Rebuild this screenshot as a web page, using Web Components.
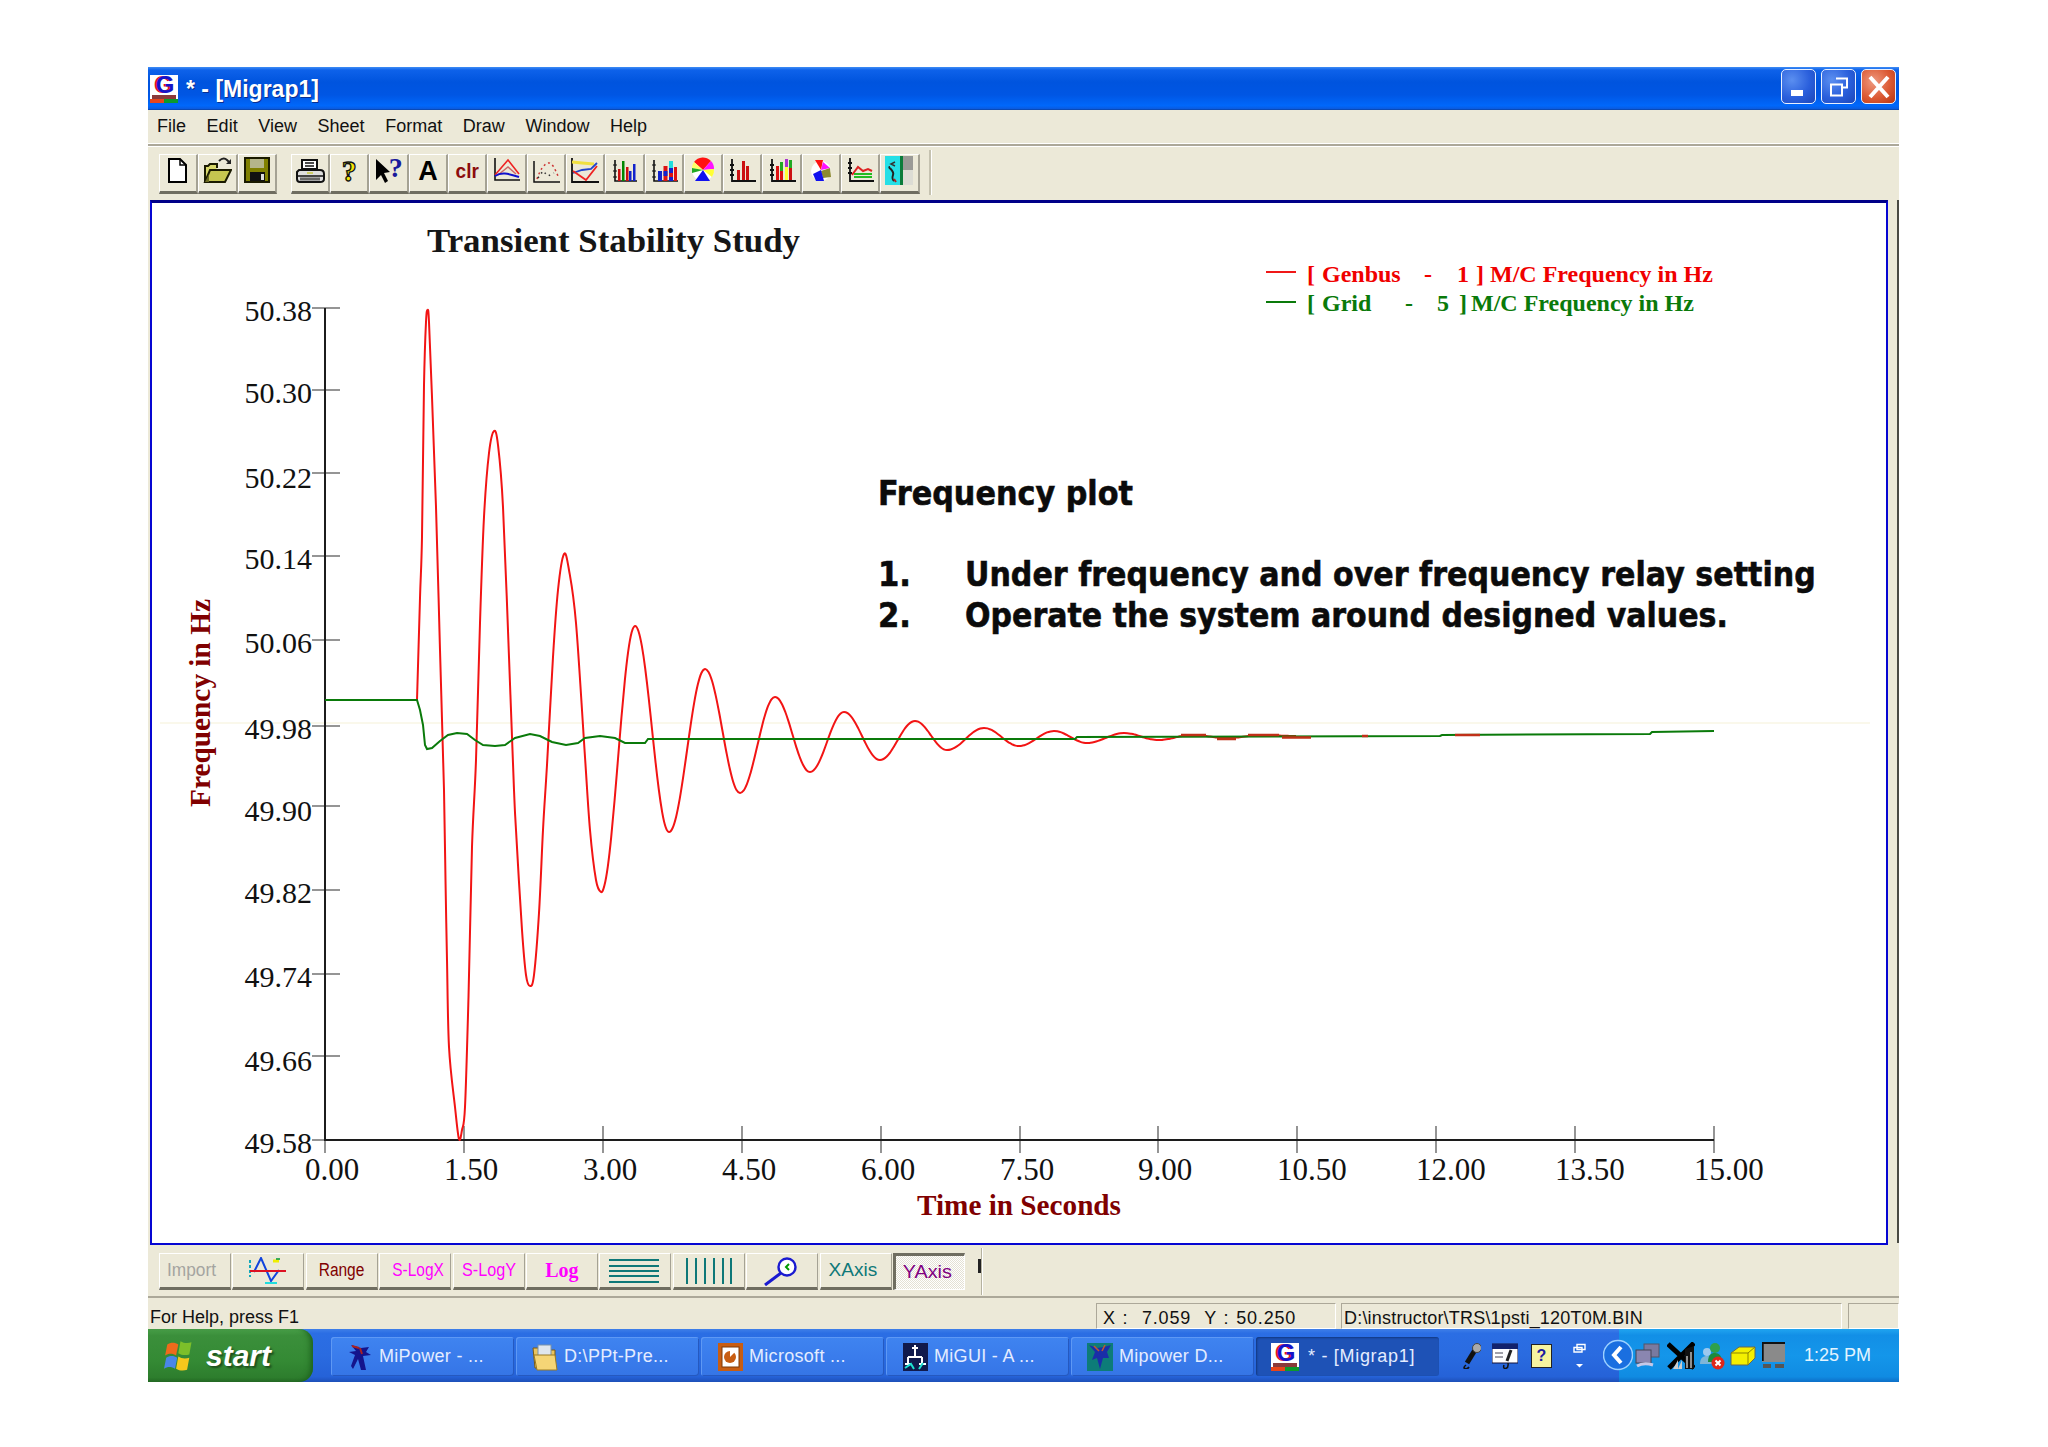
<!DOCTYPE html>
<html lang="en">
<head>
<meta charset="utf-8">
<title>Migrap1</title>
<style>
html,body{margin:0;background:#fff}
body{padding:67px 0 0 148px;width:1900px;height:1380px;overflow:hidden;font-family:"Liberation Sans",Arial,sans-serif}
</style>
</head>
<body>
<xp-window>
  <xp-titlebar>* - [Migrap1]</xp-titlebar>
  <xp-menubar><span>File</span><span>Edit</span><span>View</span><span>Sheet</span><span>Format</span><span>Draw</span><span>Window</span><span>Help</span></xp-menubar>
  <xp-toolbar>
    <xp-tool><svg viewBox="0 0 30 28" width="30" height="28"><path d="M6 2h11l6 6v17H6z" fill="#fff" stroke="#000" stroke-width="2"/><path d="M17 2v6h6" fill="none" stroke="#000" stroke-width="1.5"/></svg></xp-tool>
    <xp-tool><svg viewBox="0 0 30 28" width="30" height="28"><path d="M3 25V9h3l2-2h7v4" fill="#d8d86a" stroke="#1a1a00" stroke-width="2"/><path d="M3 25l5-12h21l-6 12z" fill="#c6c650" stroke="#1a1a00" stroke-width="2"/><path d="M3 25l4-8v8z" fill="#6a6a20"/><path d="M17 4c3-3 6-3 8-1l2 2" fill="none" stroke="#222" stroke-width="2"/><path d="M24 7h5V2z" fill="#222"/></svg></xp-tool>
    <xp-tool><svg viewBox="0 0 30 28" width="30" height="28"><rect x="3" y="1" width="24" height="24" fill="#808000" stroke="#1a1a00" stroke-width="2"/><rect x="8" y="2" width="14" height="9" fill="#b5b58a"/><rect x="8" y="15" width="15" height="9" fill="#111"/><rect x="19" y="17" width="3" height="6" fill="#ddd"/></svg></xp-tool>
    <xp-tool style="margin-left:14px"><svg viewBox="0 0 30 28" width="30" height="28"><path d="M7 3h15v9H7z" fill="#fff" stroke="#111" stroke-width="2"/><path d="M10 6h9M10 9h9" stroke="#111" stroke-width="1.3"/><path d="M4 13h21c3 0 4 2 4 4v5c0 2-2 3-4 3H5c-2 0-3-1-3-3v-7z" fill="#ddd" stroke="#111" stroke-width="2"/><path d="M2 19h27" stroke="#111" stroke-width="1.5"/><path d="M5 22h20" stroke="#666" stroke-width="3"/><path d="M12 16h6" stroke="#cc6" stroke-width="2"/></svg></xp-tool>
    <xp-tool><span style="font:700 30px/30px 'Liberation Serif',serif;color:#f2e60a;-webkit-text-stroke:1.3px #111">?</span></xp-tool>
    <xp-tool><svg viewBox="0 0 16 26" width="16" height="26"><path d="M1 1l14 13-6 1 4 8-3 2-4-8-5 5z" fill="#000"/></svg><span style="font:700 28px/28px 'Liberation Serif',serif;color:#1a1a9c;margin:-6px 0 0 -2px">?</span></xp-tool>
    <xp-tool><span style="font:700 27px/28px 'Liberation Sans',sans-serif;color:#000">A</span></xp-tool>
    <xp-tool><span style="font:700 20px/24px 'Liberation Sans',sans-serif;color:#8c0d0d;transform:scaleX(.95)">clr</span></xp-tool>
    <xp-tool><svg viewBox="0 0 30 28" width="30" height="28"><path d="M3 1v22h25" fill="none" stroke="#111" stroke-width="1.6"/><path d="M3 18L16 3l11 14" fill="none" stroke="#e22" stroke-width="1.6"/><path d="M6 18l10-8 8 7" fill="none" stroke="#c66" stroke-width="1.4"/><path d="M3 19c6-4 12-3 24 1" fill="none" stroke="#11c" stroke-width="2"/></svg></xp-tool>
    <xp-tool><svg viewBox="0 0 30 28" width="30" height="28"><path d="M3 4v21h26" fill="none" stroke="#111" stroke-width="1.5"/><path d="M6 22c3-9 7-15 11-16s7 6 10 13" fill="none" stroke="#c33" stroke-width="1.5" stroke-dasharray="2 3"/><path d="M7 21l5-7 5 5 6-3" fill="none" stroke="#333" stroke-width="1.5" stroke-dasharray="1.5 4"/></svg></xp-tool>
    <xp-tool><svg viewBox="0 0 30 28" width="30" height="28"><path d="M2 1v24h27" fill="none" stroke="#111" stroke-width="1.8"/><path d="M2 5l10 1 12 1" fill="none" stroke="#f0e040" stroke-width="3"/><path d="M3 16l9-3 9-1 6-6" fill="none" stroke="#2244cc" stroke-width="1.8"/><path d="M3 14l13 9 11-14" fill="none" stroke="#e22" stroke-width="1.8"/></svg></xp-tool>
    <xp-tool><svg viewBox="0 0 30 28" width="30" height="28"><path d="M6 3v21h22" fill="none" stroke="#111" stroke-width="1.6"/><path d="M4 8h4M4 14h4M4 20h4" stroke="#111"/><rect x="9" y="12" width="2.5" height="12" fill="#c11"/><rect x="13" y="4" width="2.5" height="20" fill="#080"/><rect x="17" y="10" width="2.5" height="14" fill="#c11"/><rect x="20" y="14" width="2.5" height="10" fill="#12c"/><rect x="24" y="7" width="2.5" height="17" fill="#12c"/></svg></xp-tool>
    <xp-tool><svg viewBox="0 0 30 28" width="30" height="28"><path d="M5 3v21h24" fill="none" stroke="#111" stroke-width="1.6"/><path d="M3 8h4M3 14h4M3 20h4" stroke="#111"/><rect x="9" y="14" width="4" height="10" fill="#12c"/><rect x="14.5" y="9" width="4" height="15" fill="#d11"/><rect x="14.5" y="14" width="4" height="5" fill="#12c"/><rect x="20" y="4" width="4" height="20" fill="#12c"/><rect x="20" y="4" width="4" height="7" fill="#2dd"/><rect x="20" y="16" width="4" height="4" fill="#d11"/><rect x="25" y="10" width="3" height="14" fill="#d11"/></svg></xp-tool>
    <xp-tool><svg viewBox="0 0 30 28" width="30" height="28"><circle cx="15" cy="13" r="11" fill="#fff"/><path d="M15 13L6 5A11 11 0 0 1 23 4z" fill="#f11"/><path d="M15 13L23 4A11 11 0 0 1 26 12z" fill="#f1f"/><path d="M15 13L26 12A11 11 0 0 1 24 20z" fill="#ff3"/><path d="M15 13L22 24H7z" fill="#11e"/><path d="M15 13L6 5A11 11 0 0 0 4 11z" fill="#ff6"/><path d="M15 13L4 11V16z" fill="#2a2"/></svg></xp-tool>
    <xp-tool><svg viewBox="0 0 30 28" width="30" height="28"><path d="M5 2v22h24M3 8h4M3 13h4M3 18h4" fill="none" stroke="#111" stroke-width="1.8"/><rect x="10" y="13" width="3" height="10" fill="#c11"/><rect x="15" y="4" width="3" height="19" fill="#c11"/><rect x="19" y="9" width="3" height="14" fill="#c11"/></svg></xp-tool>
    <xp-tool><svg viewBox="0 0 30 28" width="30" height="28"><path d="M5 2v22h24M3 8h4M3 13h4M3 18h4" fill="none" stroke="#111" stroke-width="1.8"/><rect x="9" y="9" width="3" height="14" fill="#d11"/><rect x="13" y="5" width="3" height="9" fill="#2a2"/><rect x="13" y="14" width="3" height="9" fill="#d11"/><rect x="18" y="2" width="3" height="8" fill="#a3c"/><rect x="18" y="10" width="3" height="13" fill="#ff3"/><rect x="22" y="3" width="3" height="8" fill="#2a2"/><rect x="22" y="11" width="3" height="12" fill="#c11"/></svg></xp-tool>
    <xp-tool><svg viewBox="0 0 30 28" width="30" height="28"><circle cx="15" cy="14" r="10" fill="#fff"/><path d="M15 13L9 3h8z" fill="#f11"/><path d="M15 13l2-8 7 6z" fill="#f1f"/><path d="M15 14l9-3 1 9-8 1z" fill="#8c8a30"/><path d="M15 13L7 17l3 7h8z" fill="#11e"/></svg></xp-tool>
    <xp-tool><svg viewBox="0 0 30 28" width="30" height="28"><path d="M5 1v23h24M3 6h4M3 11h4M3 16h4" fill="none" stroke="#111" stroke-width="1.8"/><path d="M7 18l6-8 5 4 5-2 4 2" fill="none" stroke="#d22" stroke-width="2"/><path d="M9 17h18M9 20h18" stroke="#2b2" stroke-width="2"/></svg></xp-tool>
    <xp-tool><svg viewBox="0 0 30 28" width="30" height="28" style="overflow:visible"><rect x="1" y="-1" width="15" height="29" fill="#25dfe6"/><rect x="16" y="-1" width="3" height="29" fill="#0a7c3a"/><rect x="19" y="-1" width="10" height="14" fill="#9a9a96"/><rect x="19" y="13" width="10" height="15" fill="#dcdcd4"/><path d="M6 10c-3 0 5 4 3 8-1 3-1 4 1 6" fill="none" stroke="#222" stroke-width="2"/><path d="M11 5l-4 2 4 2" fill="none" stroke="#333" stroke-width="1.5"/><path d="M10 22l2 3" stroke="#a22" stroke-width="2"/></svg></xp-tool>
  </xp-toolbar>
  <xp-plot></xp-plot>
  <xp-commandbar>
    <xp-cmd style="color:#a4a4a0"><b style="transform:scaleX(.96);margin-right:6px">Import</b></xp-cmd>
    <xp-cmd><svg viewBox="0 0 42 28" width="42" height="28"><path d="M3 3v17" stroke="#1ab" stroke-width="2" stroke-dasharray="3 2"/><path d="M7 15L14 1l10 23 8-11" fill="none" stroke="#14d" stroke-width="2"/><path d="M3 14h36" stroke="#d12" stroke-width="2"/><path d="M26 4h6" stroke="#ee0" stroke-width="3"/><path d="M29 2h4" stroke="#093" stroke-width="1.5"/><path d="M18 26h12" stroke="#2dd" stroke-width="2"/></svg></xp-cmd>
    <xp-cmd style="color:#800000"><b>Range</b></xp-cmd>
    <xp-cmd style="color:#ff00ff"><b style="margin-left:6px">S-LogX</b></xp-cmd>
    <xp-cmd style="color:#ff00ff"><b style="transform:scaleX(.9)">S-LogY</b></xp-cmd>
    <xp-cmd style="color:#ff00ff"><i>Log</i></xp-cmd>
    <xp-cmd><svg viewBox="0 0 54 26" width="54" height="26" style="margin-left:-3px"><path d="M2 2h50M2 8h50M2 13h50M2 18h50M2 24h50" stroke="#0e7878" stroke-width="2"/></svg></xp-cmd>
    <xp-cmd><svg viewBox="0 0 50 28" width="50" height="28"><path d="M3 1v26M12 1v26M21 1v26M30 1v26M39 1v26M47 1v26" stroke="#0e7878" stroke-width="2"/></svg></xp-cmd>
    <xp-cmd><svg viewBox="0 0 40 30" width="40" height="30"><circle cx="25" cy="11" r="8.5" fill="#fff" stroke="#1a1ad0" stroke-width="2.4"/><path d="M19 17L3 29" stroke="#1a1ad0" stroke-width="3"/><path d="M27 8l-3 3 3 3" fill="none" stroke="#090" stroke-width="2"/></svg></xp-cmd>
    <xp-cmd style="color:#0e7878"><b style="transform:scaleX(1.06);margin-right:6px">XAxis</b></xp-cmd>
    <xp-cmd pressed style="color:#800080"><b style="transform:scaleX(1.1);margin-right:6px">YAxis</b></xp-cmd>
  </xp-commandbar>
  <xp-statusbar></xp-statusbar>
  <xp-taskbar>
    <xp-taskbtn label="MiPower - ..."><svg viewBox="0 0 28 30" width="28" height="30"><path d="M5 3l10 3 8-1-3 5 5 3-8 1 3 14h-5l-3-11-5 10-2-3 4-11-6-3 7-1z" fill="#14148c"/><path d="M6 4l7 2M14 6l2 6" stroke="#a22" stroke-width="2"/></svg></xp-taskbtn>
    <xp-taskbtn label="D:\PPt-Pre..."><svg viewBox="0 0 28 30" width="28" height="30"><path d="M2 6h10l2 2h10v18H4z" fill="#e9c45f" stroke="#7a5a14"/><rect x="7" y="3" width="13" height="18" fill="#dfe6ee" stroke="#7a92a8"/><path d="M3 13h21l2 15H6z" fill="#f5d576" stroke="#9a7a24"/></svg></xp-taskbtn>
    <xp-taskbtn label="Microsoft ..."><svg viewBox="0 0 28 30" width="28" height="30"><rect x="2" y="1" width="25" height="28" fill="#c85d12"/><rect x="6" y="5" width="17" height="20" fill="#fff" stroke="#7d3a08"/><circle cx="14" cy="15" r="6" fill="#c85d12"/><path d="M14 15V9h6z" fill="#fff"/></svg></xp-taskbtn>
    <xp-taskbtn label="MiGUI - A ..."><svg viewBox="0 0 28 30" width="28" height="30"><rect x="2" y="1" width="25" height="28" fill="#111a4c"/><path d="M14 3v6M11 6h6M14 9v6M7 15h14M7 15v7M21 15v7M4 22h6M18 22h7" stroke="#fff" stroke-width="2"/><path d="M4 26l6-4 3 5M18 27l4-6" stroke="#1de0d0" stroke-width="2" fill="none"/></svg></xp-taskbtn>
    <xp-taskbtn label="Mipower D..."><svg viewBox="0 0 28 30" width="28" height="30"><rect x="1" y="1" width="26" height="28" fill="#0d7c78"/><path d="M3 3l8 3 7-1 7-2-4 7 2 6h-6l-3 11-3-11-5 2 3-8z" fill="#1a2ea8"/><path d="M8 4l5 5M19 3l-3 6" stroke="#b53" stroke-width="1.6"/></svg></xp-taskbtn>
    <xp-taskbtn active label="* - [Migrap1]"><xp-glogo></xp-glogo></xp-taskbtn>
    <div slot="icons" class="i">
      <svg viewBox="0 0 21 26" width="21" height="26" style="margin-right:11px"><path d="M7 20L15 7" stroke="#111" stroke-width="5"/><circle cx="17" cy="5" r="4.5" fill="#aaa" stroke="#444"/><path d="M6 22c-5 4 1 5 3 2" fill="none" stroke="#111" stroke-width="1.6"/></svg>
      <svg viewBox="0 0 26 26" width="26" height="26" style="margin-right:13px"><rect x="0" y="1" width="26" height="19" fill="#fff" stroke="#12123c"/><rect x="0" y="1" width="26" height="5" fill="#12226c"/><path d="M3 10h8M3 14h8" stroke="#445"/><path d="M19 7l-4 11" stroke="#222" stroke-width="3"/><path d="M12 22c-2 5 5 5 4-2" fill="none" stroke="#111" stroke-width="1.5"/></svg>
      <span style="display:flex;width:21px;height:24px;margin-right:21px;box-sizing:border-box;align-items:center;justify-content:center;background:#f6f4a0;border:1px solid #222;font:700 16px/20px 'Liberation Sans',sans-serif;color:#1c1ca0">?</span>
      <svg viewBox="0 0 14 26" width="14" height="26"><path d="M4 1.5h8v5H4zM1 4.5h8v4.500H1z" fill="#1f66d8" stroke="#fff" stroke-width="1.4"/><path d="M3 21h7l-3.500 3.500z" fill="#fff"/></svg>
    </div>
    <xp-tray>1:25 PM</xp-tray>
  </xp-taskbar>
</xp-window>
<script>
const el=(name,css,html,proto)=>{customElements.define(name,class extends HTMLElement{
  constructor(){super();const r=this.attachShadow({mode:'open'});r.innerHTML='<style>'+css+'</style>'+html;}
  connectedCallback(){if(proto)proto.call(this);}
});};

el('xp-window',`:host{display:flex;flex-direction:column;width:1751px;background:#ece9d8;position:relative;color:#000;font:18px "Liberation Sans",Arial,sans-serif}`,`<slot></slot>`);

el('xp-glogo',`:host{display:inline-flex;flex-direction:column;align-items:center;width:28px;height:28px;background:#fff;flex:none}
 span{font:700 24px/20px "Liberation Sans",sans-serif;color:#1414c8;text-shadow:-2px 0 #e01818;margin-left:2px}
 .a{width:24px;height:4px;background:#8a3a3a}
 .b{width:28px;height:4px;background:linear-gradient(90deg,#e8451a 50%,#0c9a2c 50%)}`,
`<span>G</span><div class="a"></div><div class="b"></div>`);

el('xp-titlebar',`:host{display:flex;align-items:center;height:43px;box-sizing:border-box;padding:1px 3px 0 2px;
 background:linear-gradient(#3f8df5 0,#0e62ea 7%,#0054de 35%,#0056e4 65%,#0068fb 90%,#0a5be0 97%,#0a3f9c 100%);color:#fff;font-weight:700;font-size:23px}
 .t{margin-left:8px;flex:1;text-shadow:1px 1px 0 #0a2f8f;white-space:pre}
 .b{width:35px;height:35px;box-sizing:border-box;border:1.5px solid #e8f0ff;border-radius:5px;margin-left:5px;display:flex;align-items:center;justify-content:center;background:radial-gradient(circle at 30% 30%,#5b8ff0,#2a5fdc 55%,#1c46b8)}
 .b.x{background:radial-gradient(circle at 35% 35%,#ee9a80,#dc5a34 55%,#b83410)}
 .btns{display:flex;margin-top:-5px}`,
`<xp-glogo></xp-glogo><span class="t"><slot></slot></span><div class="btns">
<div class="b"><svg width="24" height="24" viewBox="0 0 24 24"><rect x="4" y="15" width="12" height="6" fill="#fff"/></svg></div>
<div class="b"><svg width="24" height="24" viewBox="0 0 24 24"><path d="M9 3.500h11v9h-5M4 9.500h11v11H4z" fill="none" stroke="#fff" stroke-width="2"/></svg></div>
<div class="b x"><svg width="26" height="26" viewBox="0 0 26 26"><path d="M4 3l18 20M22 3L4 23" stroke="#fff" stroke-width="4"/></svg></div></div>`);

el('xp-menubar',`:host{display:flex;height:33px;align-items:center;gap:20.6px;padding:0 0 0 9px;box-sizing:border-box;font-size:18px}
 ::slotted(span){color:#111}`,`<slot></slot>`);

el('xp-toolbar',`:host{display:flex;height:55px;box-sizing:border-box;padding:10px 0 0 11px;border-top:1px solid #fff;box-shadow:inset 0 2px 0 #aca899,inset 0 3px 0 #fff;position:relative}
 .sep{position:absolute;left:781px;top:6px;height:45px;width:2px;background:#c5c2b0;box-shadow:1px 0 #fff}`,`<slot></slot><div class="sep"></div>`);

el('xp-tool',`:host{display:flex;width:39.3px;height:40px;box-sizing:border-box;align-items:center;justify-content:center;padding-bottom:4px;background:#ece9d8;
 border:1px solid;border-color:#fff #a5a294 #6f6d60 #fff;border-bottom-width:3px;border-right-width:2px}`,`<slot></slot>`);

el('xp-plot',`:host{display:block;padding:2px 11px 0 2px;box-sizing:border-box;height:1047px;width:100%;position:relative}
 .f{border:2px solid #0606d2;border-top:3px solid #000088;height:1045px;box-sizing:border-box;background:#fff}
 svg{display:block}
 .rail{position:absolute;right:0;top:2px;bottom:2px;width:2px;background:#4a4a44}
 .tk{stroke:#7a7a7a;stroke-width:1.6}
 text{font-family:"Liberation Serif","Times New Roman",serif}
 .n{font-size:30px;fill:#111}
 .nx{font-size:31px;fill:#111}
 .lb{font-size:29px;font-weight:700;fill:#800000}
 .lg{font-size:24px;font-weight:700}
 .an{font-family:"DejaVu Sans",sans-serif;font-size:33px;font-weight:700;fill:#0b0b0b;stroke:#0b0b0b;stroke-width:.6}`,
`<div class="f"><svg id="s" width="1732" height="1040" viewBox="152 203 1732 1040"></svg></div><div class="rail"></div>`,
function(){
 const ys=[308,390,473,556,640,726,806,890,974,1056,1140];
 const yo=[13,13,15,13,13,13,15,13,13,15,13];
 const yl=['50.38','50.30','50.22','50.14','50.06','49.98','49.90','49.82','49.74','49.66','49.58'];
 const xl=['0.00','1.50','3.00','4.50','6.00','7.50','9.00','10.50','12.00','13.50','15.00'];
 let h=`<path d="M160 723H1870" stroke="#f8f6e4" stroke-width="1.500"/>`;
 h+=`<text x="427" y="252" font-size="33" font-weight="700" fill="#161616" textLength="373" lengthAdjust="spacingAndGlyphs">Transient Stability Study</text>`;
 h+=`<path d="M1266 272h30" stroke="#f01818" stroke-width="2"/><path d="M1266 302h30" stroke="#0a7a0a" stroke-width="2"/>`;
 h+=`<text class="lg" y="282" fill="#f00000"><tspan x="1307">[</tspan> <tspan x="1322">Genbus</tspan> <tspan x="1424">-</tspan> <tspan x="1457">1</tspan> <tspan x="1476">]</tspan> <tspan x="1490">M/C Frequency in Hz</tspan></text>`;
 h+=`<text class="lg" y="311" fill="#0a7a0a"><tspan x="1307">[</tspan> <tspan x="1322">Grid</tspan> <tspan x="1405">-</tspan> <tspan x="1437">5</tspan> <tspan x="1459">]</tspan> <tspan x="1471">M/C Frequency in Hz</tspan></text>`;
 h+=`<text class="lb" transform="rotate(-90 210 807)" x="210" y="807" textLength="208" lengthAdjust="spacingAndGlyphs">Frequency in Hz</text>`;
 h+=`<text class="lb" x="917" y="1215" textLength="204" lengthAdjust="spacingAndGlyphs">Time in Seconds</text>`;
 ys.forEach((y,i)=>{h+=`<path class="tk" d="M312 ${y}H340"/><text class="n" x="312" y="${y+yo[i]}" text-anchor="end">${yl[i]}</text>`;});
 xl.forEach((t,i)=>{const x=Math.round(325+138.9*i);h+=`<path class="tk" d="M${x} 1126V1153"/><text class="nx" x="${x-20}" y="1180">${t}</text>`;});
 h+=`<path d="M325 308V1140H1714" fill="none" stroke="#1c1c1c" stroke-width="2"/>`;
 const red=[[417,700],[420,598],[422,537],[424,385],[426,322],[427.6,310],[429,322],[432,397],[436,507],[440,650],[444,790],[445.5,880],[447,960],[449,1047],[455,1107],[459,1139],[462,1130],[465,1107],[468.5,997],[472,847],[476,760],[480,623],[484,517],[489,453],[494,431],[498,445],[503,507],[509,657],[514,790],[516,830],[522,930],[526,975],[530,986],[534,975],[539,913],[543,830],[547,765],[553,657],[558,590],[564,554],[569,570],[576,623],[585,757],[590,830],[596,880],[601,892]];
 const ext=[[635,626],[669,832],[705,669],[740,793],[775,697],[810,772],[844,712],[880,760],[915,721],[947,750],[984,728],[1019,746],[1054,731],[1087,743],[1124,733],[1158,740],[1192,735],[1227,738],[1263,735],[1296,736]];
 let p=[601,892];
 for(const q of ext){for(let k=1;k<=10;k++){const t=k/10,e=(1-Math.cos(Math.PI*t))/2;red.push([+(p[0]+(q[0]-p[0])*t).toFixed(1),+(p[1]+(q[1]-p[1])*e).toFixed(1)]);}p=q;}
 const path=a=>'M'+a.map(c=>c.join(' ')).join('L');
 const smooth=a=>{let d='M'+a[0].join(' ');const n=a.length,f=v=>v.toFixed(1);for(let i=0;i<n-1;i++){const p0=a[Math.max(i-1,0)],p1=a[i],p2=a[i+1],p3=a[Math.min(i+2,n-1)];
   d+=`C${f(p1[0]+(p2[0]-p0[0])/6)} ${f(p1[1]+(p2[1]-p0[1])/6)} ${f(p2[0]-(p3[0]-p1[0])/6)} ${f(p2[1]-(p3[1]-p1[1])/6)} ${f(p2[0])} ${f(p2[1])}`;}return d;};
 h+=`<path d="${smooth(red)}" fill="none" stroke="#f21414" stroke-width="2"/>`;
 const green=[[325,700],[417,700],[420,710],[423,725],[425,745],[427,749],[432,748],[440,741],[448,735],[457,733],[467,734],[475,740],[483,745],[495,746],[505,745],[515,738],[530,734],[540,736],[552,742],[566,745],[578,743],[585,738],[600,736],[615,738],[625,743],[645,743],[648,739],[1075,739],[1077,737],[1440,736],[1442,735],[1650,734],[1652,732],[1714,731]];
 h+=`<path d="${path(green)}" fill="none" stroke="#0a7a0a" stroke-width="2"/>`;
 h+=`<path d="M1181 735H1206M1217 739H1236M1248 735H1279M1282 737.500H1311M1362 736H1368M1455 735H1480" stroke="#c03018" stroke-width="2.500"/>`;
 h+=`<text class="an" data-x="878" data-y="505" data-w="255">Frequency plot</text>`;
 h+=`<text class="an" data-x="878" data-y="586" data-w="33">1.</text><text class="an" data-x="965" data-y="586" data-w="851">Under frequency and over frequency relay setting</text>`;
 h+=`<text class="an" data-x="878" data-y="627" data-w="33">2.</text><text class="an" data-x="965" data-y="627" data-w="763">Operate the system around designed values.</text>`;
 const s=this.shadowRoot.getElementById('s');
 s.innerHTML=h;
 s.querySelectorAll('text[data-w]').forEach(t=>{const k=t.dataset.w/t.getComputedTextLength();t.setAttribute('transform',`translate(${t.dataset.x} ${t.dataset.y}) scale(${k.toFixed(4)} 1)`);});
});

el('xp-commandbar',`:host{display:flex;height:53px;box-sizing:border-box;padding:8px 0 0 11px;gap:1.4px;border-bottom:2px solid #aca899;position:relative}
 .g{position:absolute;left:830px;top:14px;width:3px;height:14px;background:#222}
 .s{position:absolute;left:833px;top:3px;bottom:1px;width:1px;background:#b5b2a0;box-shadow:1px 0 #fff}`,`<slot></slot><div class="g"></div><div class="s"></div>`);

el('xp-cmd',`:host{display:flex;width:72px;height:37px;box-sizing:border-box;align-items:center;justify-content:center;border:1px solid;border-color:#fff #a5a294 #6f6d60 #fff;border-bottom-width:3px;font-size:18px;white-space:nowrap;background:#ece9d8}
 :host([pressed]){border-color:#6f6d60 #fff #fff #6f6d60;border-top-width:3px;border-left-width:3px;border-bottom-width:1px;background:repeating-conic-gradient(#fff 0 25%,#e4e1d4 0 50%) 0 0/2px 2px}
 ::slotted(b){font-weight:400;display:inline-block;transform:scaleX(.86)}
 ::slotted(i){font:700 20px "Liberation Serif",serif}`,`<slot></slot>`);

el('xp-statusbar',`:host{display:flex;height:31px;box-sizing:border-box;padding:5px 0 0 2px;font-size:18px;color:#111;white-space:pre}
 span{display:block;height:26px;line-height:28px;box-sizing:border-box}
 .h{width:946px}
 .p{border:1px solid;border-color:#aca899 #fff #fff #aca899;padding-left:6px}
 .a{width:240px;margin-right:5px;word-spacing:1px;letter-spacing:.8px}.c{width:501px;margin-right:6px;padding-left:2px;letter-spacing:.2px}.d{flex:1}`,
`<span class="h">For Help, press F1</span><span class="p a">X :  7.059  Y : 50.250</span><span class="p c">D:\\instructor\\TRS\\1psti_120T0M.BIN</span><span class="p d"></span>`);

el('xp-taskbar',`:host{display:flex;height:53px;box-sizing:border-box;background:linear-gradient(#3f7fe8 0,#2b6ee4 8%,#2a6be0 50%,#2562d8 90%,#1d4fb8 100%);font-size:18px;color:#fff}
 .st{width:165px;flex:none;display:flex;align-items:center;box-sizing:border-box;padding-left:16px;gap:9px;border-radius:0 14px 14px 0;background:linear-gradient(#4aa14a 0,#3b8f3b 12%,#348a34 60%,#2d7d2d 92%,#246a24);box-shadow:inset -6px 0 6px -4px #1a5c1a}
 .st b{font:italic 700 30px "Liberation Sans",sans-serif;text-shadow:2px 2px 2px #1d4e1d}
 .tb{display:flex;gap:2px;margin-left:18px;width:1110px;flex:none}
 ::slotted(.i){display:flex;align-items:center;margin-left:19px;flex:none}`,
`<div class="st"><svg viewBox="0 0 30 28" width="33" height="31"><path d="M3 4c3-2 7-2 10 0l-2 10c-3-2-7-2-10 0z" fill="#ef6a1c"/><path d="M15 1c3 2 7 2 10 1l-2 11c-3 1-7 1-10-1z" fill="#7cbf2a"/><path d="M1 16c3-2 7-2 10 0l-2 10c-3-2-7-2-10 0z" fill="#4a86e8" transform="translate(1 0)"/><path d="M13 15c3 2 7 2 10 1l-2 11c-3 1-7 1-10-1z" fill="#f5c81c"/></svg><b>start</b></div>
<div class="tb"><slot></slot></div><slot name="icons"></slot><slot name="tray"></slot>`,
function(){this.querySelector('xp-tray').setAttribute('slot','tray');});

el('xp-taskbtn',`:host{display:flex;width:183px;flex:none;height:39px;margin-top:8px;box-sizing:border-box;align-items:center;gap:5px;padding-left:15px;border-radius:3px;background:linear-gradient(#3f84f0,#3a7cec 50%,#3575e6);box-shadow:inset 1px 1px 0 #5e98f4,inset -1px -1px 0 #2559c0;color:#e4ecff;white-space:pre;overflow:hidden}
 :host([active]){background:#1e52b6;box-shadow:inset 1px 1px 2px #12387e;gap:9px}
 :host([active]) span{letter-spacing:.7px}
 span{letter-spacing:.3px}`,`<slot></slot><span id="l"></span>`,
function(){this.shadowRoot.getElementById('l').textContent=this.getAttribute('label');});

el('xp-tray',`:host{display:flex;width:280px;height:53px;margin-left:auto;box-sizing:border-box;padding-left:16px;align-items:center;position:relative;background:linear-gradient(#20a4f0 0,#128fe6 12%,#1496ea 50%,#108be2 90%,#0d6fc8);color:#e4f4ff;font-size:18px}
 svg{flex:none}
 .ch{position:absolute;left:-16px;top:10px}
 .c{margin-left:19px}`,
`<svg class="ch" viewBox="0 0 30 32" width="30" height="32"><circle cx="15" cy="16" r="14.500" fill="#1a6fe0" stroke="#9cd0ff" stroke-width="1.500"/><path d="M18 8l-7 8 7 8" fill="none" stroke="#fff" stroke-width="4"/></svg>
<svg viewBox="0 0 25 26" width="25" height="26" style="margin-right:7px"><rect x="9" y="1" width="15" height="13" fill="#7a7aa0" stroke="#556"/><rect x="1" y="7" width="15" height="13" fill="#8a86b0" stroke="#445"/><path d="M2 23c5-3 10-3 16-1" stroke="#c5c8e8" stroke-width="3" fill="none"/></svg>
<svg viewBox="0 0 28 28" width="28" height="28" style="margin-right:3px"><path d="M1 2l26 24M27 1L2 26" stroke="#000" stroke-width="5"/><path d="M18 7v20h9V4z" fill="#111"/><path d="M20 14v12M24 10v16" stroke="#bbb" stroke-width="1.500"/><path d="M6 27l5-9v9zM11 27l4-9v9z" fill="#ccc"/></svg>
<svg viewBox="0 0 27 28" width="27" height="28" style="margin-right:5px"><circle cx="9" cy="10" r="4" fill="#9cc8ee"/><path d="M2 22c0-6 3-8 7-8s6 3 6 8z" fill="#7eb6d8"/><circle cx="17" cy="6" r="5" fill="#2fa04c"/><path d="M10 20c0-7 3-9 7-9s7 3 7 9z" fill="#1d8a3c"/><circle cx="20" cy="21" r="6.500" fill="#e0261a"/><path d="M17.500 18.500l5 5M22.500 18.500l-5 5" stroke="#fff" stroke-width="2"/></svg>
<svg viewBox="0 0 26 22" width="26" height="22" style="margin-right:6px"><path d="M1 8l8-6h16v11l-7 7H1z" fill="#f4f000" stroke="#665" /><path d="M1 8h17v12M18 8l7-6" fill="none" stroke="#8a8400"/></svg>
<svg viewBox="0 0 23 27" width="23" height="27"><rect x="0" y="0" width="23" height="20" fill="#8a8a8a"/><path d="M0 1h23M.7 0v19" stroke="#111" stroke-width="2"/><rect x="1" y="22" width="8" height="4" fill="#555"/><rect x="13" y="22" width="9" height="4" fill="#555"/></svg>
<span class="c"><slot></slot></span>`);
</script>
</body>
</html>
